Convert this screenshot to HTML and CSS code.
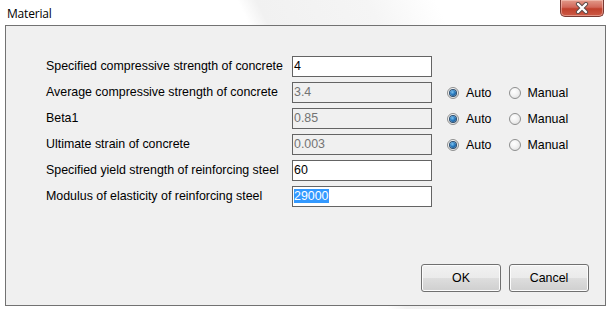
FILE: index.html
```html
<!DOCTYPE html>
<html lang="en">
<head>
    <meta charset="UTF-8">
    <title>Material</title>
    <link rel="stylesheet" href="styles.css">
</head>
<body>
    <div class="window">
        <div class="titlebar">
            <span class="title">Material</span>
            <button class="close" type="button">
                <svg width="16" height="12" viewBox="0 0 16 12">
                    <path d="M4 2 L12 10 M12 2 L4 10" stroke="#5a4a48" stroke-width="4.2" stroke-linecap="round"/>
                    <path d="M4 2 L12 10 M12 2 L4 10" stroke="#fff" stroke-width="2.4" stroke-linecap="round"/>
                </svg>
            </button>
        </div>

        <div class="client">
            <div class="rows">
                <div class="row">
                    <label>Specified compressive strength of concrete</label>
                    <div class="field">4</div>
                </div>
                <div class="row">
                    <label>Average compressive strength of concrete</label>
                    <div class="field disabled">3.4</div>
                    <div class="choice">
                        <span class="radio on"></span><span>Auto</span>
                        <span class="radio"></span><span>Manual</span>
                    </div>
                </div>
                <div class="row">
                    <label>Beta1</label>
                    <div class="field disabled">0.85</div>
                    <div class="choice">
                        <span class="radio on"></span><span>Auto</span>
                        <span class="radio"></span><span>Manual</span>
                    </div>
                </div>
                <div class="row">
                    <label>Ultimate strain of concrete</label>
                    <div class="field disabled">0.003</div>
                    <div class="choice">
                        <span class="radio on"></span><span>Auto</span>
                        <span class="radio"></span><span>Manual</span>
                    </div>
                </div>
                <div class="row">
                    <label>Specified yield strength of reinforcing steel</label>
                    <div class="field">60</div>
                </div>
                <div class="row">
                    <label>Modulus of elasticity of reinforcing steel</label>
                    <div class="field"><span class="selected">29000</span></div>
                </div>
            </div>

            <div class="buttons">
                <button type="button">OK</button>
                <button type="button">Cancel</button>
            </div>
        </div>
    </div>
</body>
</html>
```

FILE: styles.css
```css
* {
    box-sizing: border-box;
}

body {
    margin: 0;
    font-family: 'Liberation Sans', Arial, sans-serif;
    font-size: 12.4px;
    color: #000;
}

.window {
    width: 610px;
    height: 309px;
    display: flex;
    flex-direction: column;
    background: linear-gradient(64deg, #fff 51%, #f1f1f1 53.5%, #f5f5f5 68%, #fff 77%);
}

.titlebar {
    height: 25px;
    display: flex;
    justify-content: space-between;
    align-items: flex-start;
    padding: 0 6px 0 7px;
}

.title {
    font-family: 'Open Sans', 'Noto Sans', sans-serif;
    font-size: 12px;
    margin-top: 5px;
    letter-spacing: -0.2px;
}

.close {
    width: 44px;
    height: 17px;
    margin-top: 0;
    padding: 0;
    border: 1px solid #7a3a33;
    border-top: none;
    border-radius: 0 0 5px 5px;
    background: linear-gradient(#e29a8a 0%, #d2685a 45%, #c0402c 55%, #cc5a46 100%);
    box-shadow: inset 0 0 0 1px rgba(255, 220, 210, 0.45);
    display: flex;
    align-items: center;
    justify-content: center;
}

.client {
    flex: 1;
    margin: 0 4px 3px 5px;
    border: 1px solid #727272;
    background: #f0f0f0;
    display: flex;
    flex-direction: column;
    padding: 30px 16px 13px 40px;
}

.rows {
    display: flex;
    flex-direction: column;
    gap: 5px;
}

.row {
    display: flex;
    align-items: center;
    height: 21px;
}

.row label {
    width: 246px;
    margin-top: -1px;
}

.field {
    width: 140px;
    height: 21px;
    border: 1px solid #646464;
    background: #fff;
    padding: 2px 1px 0;
    line-height: 15px;
}

.field.disabled {
    background: #f0f0f0;
    color: #737373;
}

.selected {
    display: inline-block;
    background: #3399ff;
    color: #fff;
    height: 14px;
    line-height: 14px;
    padding-right: 1px;
}

.choice {
    display: flex;
    align-items: center;
    margin-left: 15px;
}

.radio {
    width: 12px;
    height: 12px;
    border-radius: 50%;
    border: 1px solid #8e8f8f;
    background: radial-gradient(circle at 40% 35%, #fff 0%, #f2f2f2 45%, #d8d8d8 100%);
    margin-right: 7px;
    display: flex;
    align-items: center;
    justify-content: center;
}

.radio + span {
    margin-right: 17px;
}

.radio.on::after {
    content: "";
    width: 6px;
    height: 6px;
    border-radius: 50%;
    background: radial-gradient(circle at 40% 35%, #7ec3f0 0%, #2a7cc0 45%, #0c3f75 100%);
    box-shadow: 0 0 0 1px #2b4d6e;
}

.buttons {
    margin-top: auto;
    display: flex;
    justify-content: flex-end;
    gap: 8px;
}

.buttons button {
    width: 80px;
    height: 28px;
    font-family: 'Liberation Sans', Arial, sans-serif;
    font-size: 12.4px;
    color: #000;
    border: 1px solid #707070;
    border-radius: 3px;
    background: linear-gradient(#f2f2f2 0%, #ebebeb 48%, #dddddd 52%, #cfcfcf 100%);
    box-shadow: inset 0 0 0 1px #fcfcfc;
}
```
